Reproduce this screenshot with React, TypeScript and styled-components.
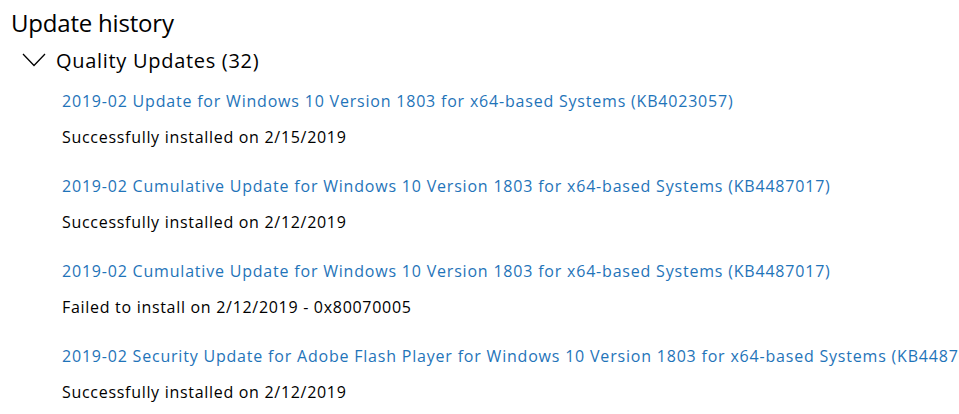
import React from 'react';
import styled, { createGlobalStyle } from 'styled-components';

const GlobalStyle = createGlobalStyle`
  html, body {
    margin: 0;
    padding: 0;
    background: #ffffff;
  }
  body {
    font-family: 'Open Sans', 'Noto Sans', sans-serif;
    color: #000000;
    overflow: hidden;
  }
`;

const Page = styled.div`
  width: 959px;
  height: 414px;
  overflow: hidden;
  padding: 6px 0 0 11px;
  box-sizing: border-box;
`;

const Title = styled.h1`
  margin: 0;
  font-size: 24px;
  font-weight: 400;
  letter-spacing: -0.2px;
  line-height: 34px;
`;

const GroupHeader = styled.div`
  display: flex;
  align-items: center;
  gap: 10px;
  margin: 0 0 0 11px;
  height: 40px;
  font-size: 20px;
  letter-spacing: 0.7px;
`;

const Chevron = styled.svg`
  width: 24px;
  height: 14px;
  flex: none;
`;

const List = styled.ul`
  list-style: none;
  margin: 3px 0 0;
  padding: 0 0 0 51px;
`;

const Item = styled.li`
  height: 85px;
`;

const Link = styled.a`
  display: block;
  white-space: nowrap;
  font-size: 16px;
  letter-spacing: 0.8px;
  line-height: 37px;
  color: #1f74b9;
  text-decoration: none;
  cursor: pointer;
`;

const Status = styled.div`
  font-size: 16px;
  letter-spacing: 0.7px;
  line-height: 34px;
  white-space: nowrap;
`;

const updates = [
  {
    name: '2019-02 Update for Windows 10 Version 1803 for x64-based Systems (KB4023057)',
    status: 'Successfully installed on 2/15/2019',
  },
  {
    name: '2019-02 Cumulative Update for Windows 10 Version 1803 for x64-based Systems (KB4487017)',
    status: 'Successfully installed on 2/12/2019',
  },
  {
    name: '2019-02 Cumulative Update for Windows 10 Version 1803 for x64-based Systems (KB4487017)',
    status: 'Failed to install on 2/12/2019 - 0x80070005',
  },
  {
    name: '2019-02 Security Update for Adobe Flash Player for Windows 10 Version 1803 for x64-based Systems (KB4487038)',
    status: 'Successfully installed on 2/12/2019',
  },
];

const App: React.FC = () => {
  return (
    <>
      <GlobalStyle />
      <Page>
        <Title>Update history</Title>
        <GroupHeader>
          <Chevron viewBox="0 0 24 14">
            <polyline points="1,1 12,12.5 23,1" fill="none" stroke="#000" strokeWidth="1.3" />
          </Chevron>
          Quality Updates (32)
        </GroupHeader>
        <List>
          {updates.map((u, i) => (
            <Item key={i}>
              <Link>{u.name}</Link>
              <Status>{u.status}</Status>
            </Item>
          ))}
        </List>
      </Page>
    </>
  );
};

export default App;
